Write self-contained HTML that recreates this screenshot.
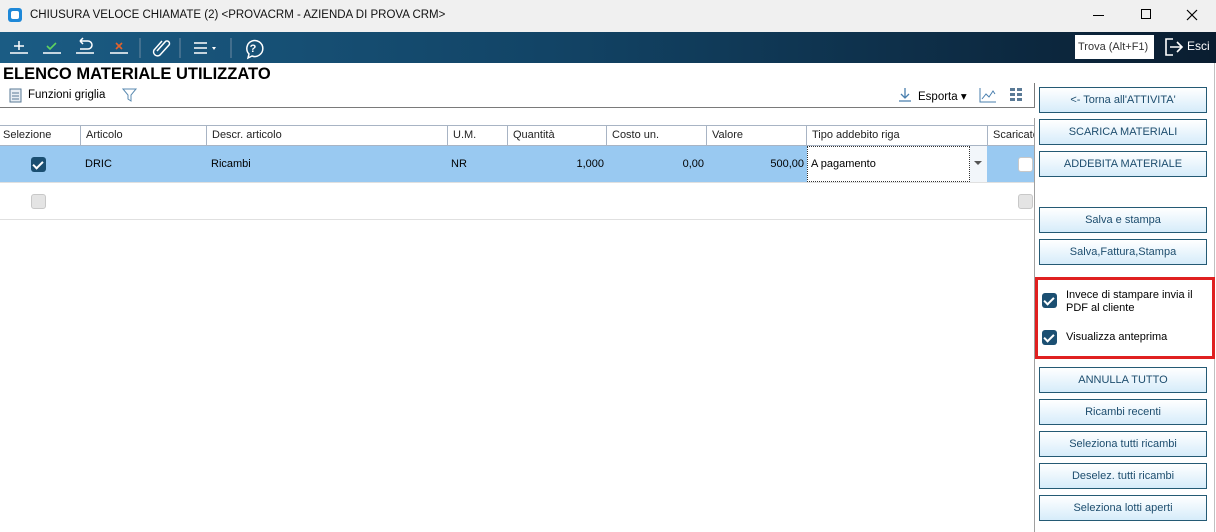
<!DOCTYPE html>
<html><head><meta charset="utf-8"><style>
*{margin:0;padding:0;box-sizing:border-box}
body{width:1216px;height:532px;overflow:hidden;background:#fff;font-family:"Liberation Sans",sans-serif;font-size:12px;color:#000;position:relative}
.a{position:absolute;white-space:nowrap}
.title{left:0;top:0;width:1216px;height:32px;background:#f0f0f0}
.tb{left:0;top:32px;width:1216px;height:31px;background:linear-gradient(90deg,#1b5c84 0%,#124466 45%,#0a1d30 100%)}
.btn{position:absolute;left:1039px;width:168px;height:26px;border:1.5px solid #245a74;background:linear-gradient(#ffffff,#d6ecfa);color:#1d4d6e;font-size:11px;text-align:center;line-height:24px;white-space:nowrap}
.th{position:absolute;top:125px;height:21px;border-right:1px solid #a8b4c4;line-height:20px;padding-left:5px;font-size:11px;color:#222}
.cb{position:absolute;width:15px;height:15px;border-radius:3px}
.on{background:#1b4f72}
.on:after{content:"";position:absolute;left:4px;top:1.5px;width:4px;height:8px;border:solid #fff;border-width:0 2px 2px 0;transform:rotate(45deg)}
.off{background:#e4e4e4;border:1px solid #c8c8c8}
.td{position:absolute;top:146px;height:36px;line-height:36px;font-size:11px}
</style></head><body>
<div class="a title"></div>
<div class="a" style="left:8px;top:8px;width:14px;height:14px;background:#1e88d8;border-radius:3px"></div>
<div class="a" style="left:11px;top:11px;width:8px;height:8px;background:#fff;border-radius:2px"></div>
<div class="a" style="left:30px;top:9px;font-size:11.5px;color:#111">CHIUSURA VELOCE CHIAMATE (2) &lt;PROVACRM - AZIENDA DI PROVA CRM&gt;</div>
<div class="a" style="left:1093px;top:15px;width:11px;height:1px;background:#000"></div>
<div class="a" style="left:1141px;top:9px;width:10px;height:10px;border:1px solid #000"></div>
<svg class="a" style="left:1186px;top:9px" width="12" height="12"><path d="M1 1l10 10M11 1L1 11" stroke="#000" stroke-width="1.2"/></svg>

<div class="a tb"></div>
<svg class="a" style="left:0;top:32px" width="270" height="31">
<g stroke="#fff" stroke-width="1.5" fill="none">
<line x1="10" y1="21" x2="28" y2="21"/><line x1="19" y1="9" x2="19" y2="18"/><line x1="14" y1="14" x2="24" y2="14"/>
<line x1="43" y1="21" x2="61" y2="21"/>
<line x1="76" y1="21" x2="94" y2="21"/><path d="M80 9h8a4 4 0 0 1 0 8h-8M80 9l3-3M80 9l3 3"/>
<line x1="110" y1="21" x2="128" y2="21"/>
<line x1="140" y1="6" x2="140" y2="26" stroke="#6c8aa2" stroke-width="1"/>
<path d="M157 19l8-9a2.5 2.5 0 0 1 4 3l-9 10a4 4 0 0 1-6-5l8-9"/>
<line x1="180" y1="6" x2="180" y2="26" stroke="#6c8aa2" stroke-width="1"/>
<line x1="194" y1="11" x2="207" y2="11"/><line x1="194" y1="16" x2="207" y2="16"/><line x1="194" y1="21" x2="207" y2="21"/>
<line x1="231" y1="6" x2="231" y2="26" stroke="#6c8aa2" stroke-width="1"/>
<path d="M252 24l-4 2 1-4a8 8 0 1 1 3 2z"/>
</g>
<path d="M47 14l3 3 6-6" stroke="#5fd35f" stroke-width="1.6" fill="none"/>
<path d="M116 11l6 6M122 11l-6 6" stroke="#e2622c" stroke-width="1.6"/>
<path d="M212 15l4 0-2 3z" fill="#fff"/>
<text x="253" y="20" fill="#fff" font-size="11" font-family="Liberation Sans" text-anchor="middle" font-weight="bold">?</text>
</svg>
<div class="a" style="left:1075px;top:35px;width:79px;height:24px;background:#fff;color:#333;font-size:11px;line-height:24px;padding-left:3px">Trova (Alt+F1)</div>
<svg class="a" style="left:1163px;top:37px" width="22" height="20"><path d="M10 2H3v16h7" stroke="#fff" stroke-width="1.6" fill="none"/><path d="M7 10h12M14 5l5 5-5 5" stroke="#fff" stroke-width="1.6" fill="none"/></svg>
<div class="a" style="left:1187px;top:39px;color:#fff;font-size:12px">Esci</div>

<div class="a" style="left:3px;top:65px;font-size:16.5px;font-weight:bold">ELENCO MATERIALE UTILIZZATO</div>
<svg class="a" style="left:9px;top:88px" width="14" height="15"><rect x="1" y="1" width="11" height="13" fill="#e8eef4" stroke="#5a7a96"/><path d="M3 5h7M3 8h7M3 11h7" stroke="#5a7a96"/></svg>
<div class="a" style="left:28px;top:89px;font-size:11.5px">Funzioni griglia</div>
<svg class="a" style="left:122px;top:87px" width="16" height="16"><path d="M1 2h13l-5 6v6l-3-2V8z" fill="none" stroke="#5a8ab0"/></svg>
<div class="a" style="left:0;top:107px;width:1035px;height:1px;background:#7a7a7a"></div>
<div class="a" style="left:1034px;top:83px;width:1px;height:25px;background:#7a7a7a"></div>
<svg class="a" style="left:897px;top:87px" width="16" height="16"><path d="M8 1v10M4 7l4 4 4-4M2 14h12" stroke="#4a7fae" fill="none" stroke-width="1.3"/></svg>
<div class="a" style="left:918px;top:89px;font-size:11.5px">Esporta ▾</div>
<svg class="a" style="left:979px;top:87px" width="18" height="16"><path d="M1 1v14h16M3 12l4-5 3 3 4-6 2 3" stroke="#4a7fae" fill="none"/></svg>
<svg class="a" style="left:1010px;top:88px" width="14" height="14" fill="#5a7a96"><rect x="0" y="0" width="5" height="3"/><rect x="7" y="0" width="5" height="3"/><rect x="0" y="5" width="5" height="3"/><rect x="7" y="5" width="5" height="3"/><rect x="0" y="10" width="5" height="3"/><rect x="7" y="10" width="5" height="3"/></svg>

<div class="a" style="left:0;top:125px;width:1034px;height:1px;background:#a8b4c4"></div>
<div class="a" style="left:0;top:145px;width:1034px;height:1px;background:#a8b4c4"></div>
<div class="th" style="left:0;width:81px;padding-left:3px">Selezione</div>
<div class="th" style="left:81px;width:126px">Articolo</div>
<div class="th" style="left:207px;width:241px">Descr. articolo</div>
<div class="th" style="left:448px;width:60px">U.M.</div>
<div class="th" style="left:508px;width:99px">Quantità</div>
<div class="th" style="left:607px;width:100px">Costo un.</div>
<div class="th" style="left:707px;width:100px">Valore</div>
<div class="th" style="left:807px;width:181px">Tipo addebito riga</div>
<div class="th" style="left:988px;width:46px;border:none;overflow:hidden;white-space:nowrap">Scaricato</div>

<div class="a" style="left:0;top:146px;width:1034px;height:36px;background:#99c9f1"></div>
<div class="a" style="left:0;top:182px;width:1034px;height:1px;background:#e0e0e0"></div>
<div class="a" style="left:0;top:219px;width:1034px;height:1px;background:#e0e0e0"></div>
<div class="cb on" style="left:31px;top:157px"></div>
<div class="td" style="left:85px">DRIC</div>
<div class="td" style="left:211px">Ricambi</div>
<div class="td" style="left:451px">NR</div>
<div class="td" style="left:508px;width:96px;text-align:right">1,000</div>
<div class="td" style="left:607px;width:97px;text-align:right">0,00</div>
<div class="td" style="left:707px;width:97px;text-align:right">500,00</div>
<div class="a" style="left:807px;top:146px;width:163px;height:36px;background:#fff;border:1px dotted #333"></div>
<div class="a" style="left:970px;top:146px;width:17px;height:36px;background:#f2f6fa"></div>
<div class="td" style="left:811px">A pagamento</div>
<div class="a" style="left:974px;top:161px;width:0;height:0;border-left:4px solid transparent;border-right:4px solid transparent;border-top:4px solid #555"></div>
<div class="a" style="left:1018px;top:157px;width:15px;height:15px;background:#fff;border:1px solid #c8c8c8;border-radius:3px"></div>
<div class="cb off" style="left:31px;top:194px"></div>
<div class="cb off" style="left:1018px;top:194px"></div>

<div class="a" style="left:1034px;top:118px;width:1px;height:414px;background:#a0a0a0"></div>
<div class="a" style="left:1214px;top:63px;width:1px;height:469px;background:#c0c0c0"></div>
<div class="btn" style="top:87px">&lt;- Torna all'ATTIVITA'</div>
<div class="btn" style="top:119px">SCARICA MATERIALI</div>
<div class="btn" style="top:151px">ADDEBITA MATERIALE</div>
<div class="btn" style="top:207px">Salva e stampa</div>
<div class="btn" style="top:239px">Salva,Fattura,Stampa</div>
<div class="a" style="left:1035px;top:277px;width:180px;height:82px;border:3px solid #e02020"></div>
<div class="cb on" style="left:1042px;top:293px"></div>
<div class="a" style="left:1066px;top:289px;font-size:11px;line-height:13px">Invece di stampare invia il<br>PDF al cliente</div>
<div class="cb on" style="left:1042px;top:330px"></div>
<div class="a" style="left:1066px;top:331px;font-size:11px">Visualizza anteprima</div>
<div class="btn" style="top:367px">ANNULLA TUTTO</div>
<div class="btn" style="top:399px">Ricambi recenti</div>
<div class="btn" style="top:431px">Seleziona tutti ricambi</div>
<div class="btn" style="top:463px">Deselez. tutti ricambi</div>
<div class="btn" style="top:495px">Seleziona lotti aperti</div>
</body></html>
